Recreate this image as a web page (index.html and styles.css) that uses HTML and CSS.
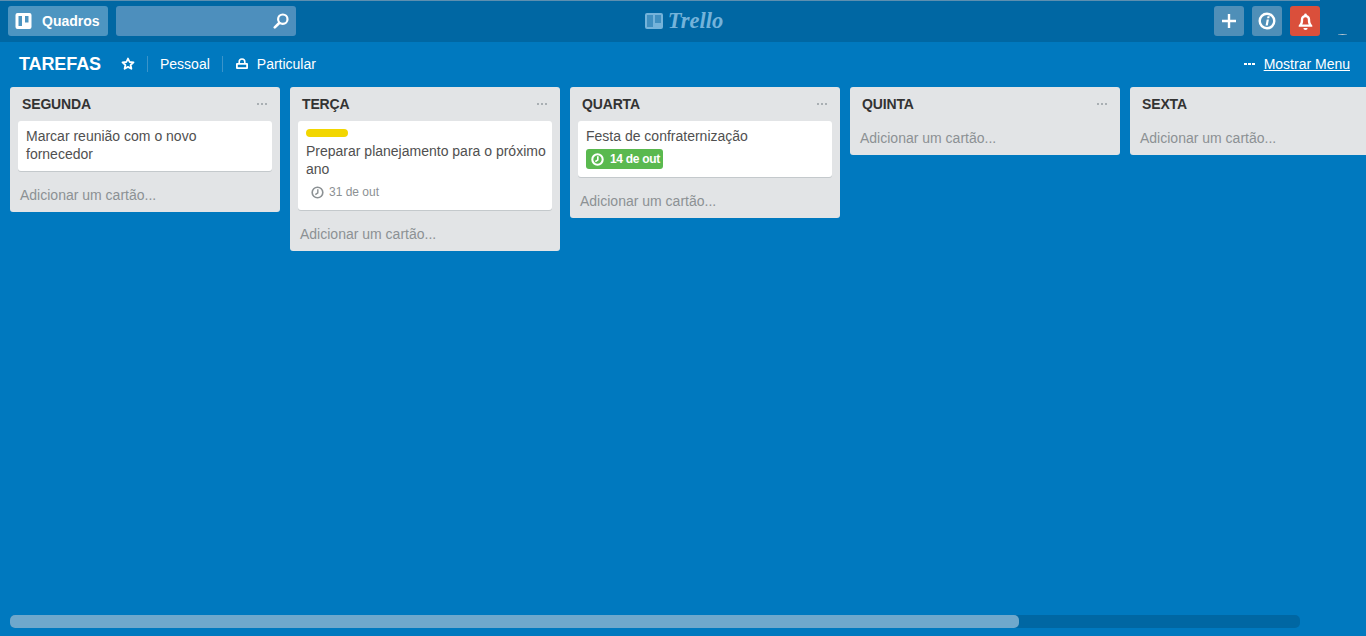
FILE: index.html
```html
<!DOCTYPE html>
<html lang="pt">
<head>
<meta charset="utf-8">
<title>Tarefas | Trello</title>
<link rel="stylesheet" href="styles.css">
</head>
<body>
<div class="page">
  <header class="topbar">
    <div class="topbar-left">
      <button class="btn btn-boards">
        <svg class="ico-boards" viewBox="0 0 16 16"><path fill="#fff" fill-rule="evenodd" d="M2 0h12a2 2 0 0 1 2 2v12a2 2 0 0 1-2 2H2a2 2 0 0 1-2-2V2a2 2 0 0 1 2-2zm1 3v10h3.500V3zM9.500 3v6.500H13V3z"/></svg>
        <span>Quadros</span>
      </button>
      <div class="search">
        <svg class="ico-search" viewBox="0 0 16 16"><circle cx="9.800" cy="6.200" r="4.700" fill="none" stroke="#fff" stroke-width="2.200"/><path d="M6.200 10 1.800 14.400" stroke="#fff" stroke-width="2.600" stroke-linecap="round"/></svg>
      </div>
    </div>
    <div class="logo">
      <svg class="ico-logo" viewBox="0 0 18 16"><path fill="#74b3da" fill-rule="evenodd" d="M2 0h14a2 2 0 0 1 2 2v12a2 2 0 0 1-2 2H2a2 2 0 0 1-2-2V2a2 2 0 0 1 2-2zm0 2v12h6V2zM10 2v8h6V2z"/><path fill="#3f8fc0" d="M2 2h6v12H2zM10 2h6v8h-6z"/></svg>
      <span class="logo-text">Trello</span>
    </div>
    <div class="topbar-right">
      <button class="btn btn-icon"><svg viewBox="0 0 16 16"><path d="M8 1v14M1 8h14" stroke="#fff" stroke-width="2.400"/></svg></button>
      <button class="btn btn-icon btn-info"><svg viewBox="0 0 18 18"><circle cx="9" cy="9" r="7.300" fill="none" stroke="#fff" stroke-width="2.400"/><path d="M9.500 4.200h2.200l-.4 2H9.100zM8.700 7.400h2.200l-1.100 6.200H7.600z" fill="#fff"/></svg></button>
      <button class="btn btn-icon btn-bell"><svg viewBox="0 0 16 16"><path fill="#fff" fill-rule="evenodd" d="M8 .5a1.300 1.300 0 0 1 1.300 1.300c2.100.5 3.100 2.200 3.100 4.400 0 2.600.4 3.900 2 5.500v1.300H1.600v-1.300c1.600-1.600 2-2.900 2-5.500 0-2.200 1-3.900 3.100-4.400A1.300 1.300 0 0 1 8 .5zM8 4c-1.500 0-2.200 1-2.200 2.400 0 1.900-.2 3.400-.9 4.500h6.200c-.7-1.100-.9-2.600-.9-4.500C10.200 5 9.500 4 8 4zM6 14h4a2 2 0 0 1-4 0z"/></svg></button>
      <span class="avatar-mark"></span>
    </div>
  </header>

  <div class="board-head">
    <div class="board-info">
      <h1 class="board-title">TAREFAS</h1>
      <svg class="ico-star" viewBox="0 0 14 14"><path d="M7 1.500 8.600 5l3.900.4-2.900 2.600.8 3.800L7 9.900l-3.400 1.900.8-3.800L1.500 5.400 5.400 5z" fill="none" stroke="#fff" stroke-width="1.800" stroke-linejoin="round"/></svg>
      <span class="divider"></span>
      <span class="board-link">Pessoal</span>
      <span class="divider"></span>
      <svg class="ico-lock" viewBox="0 0 12 12"><path d="M3.200 5.500V3.800a2.800 2.800 0 0 1 5.600 0v1.700" fill="none" stroke="#fff" stroke-width="1.600"/><path fill="#fff" fill-rule="evenodd" d="M1 5h10a1 1 0 0 1 1 1v4a1 1 0 0 1-1 1H1a1 1 0 0 1-1-1V6a1 1 0 0 1 1-1zm.8 1.800v2.400h8.400V6.800z"/></svg>
      <span class="board-link">Particular</span>
    </div>
    <div class="board-menu">
      <span class="dots dots-white"><i></i><i></i><i></i></span>
      <a class="menu-link">Mostrar Menu</a>
    </div>
  </div>

  <main class="lists">
    <section class="list">
      <div class="list-head"><h2>SEGUNDA</h2><span class="dots"><i></i><i></i><i></i></span></div>
      <article class="card"><p>Marcar reunião com o novo fornecedor</p></article>
      <div class="add">Adicionar um cartão...</div>
    </section>
    <section class="list">
      <div class="list-head"><h2>TERÇA</h2><span class="dots"><i></i><i></i><i></i></span></div>
      <article class="card">
        <div class="label"></div>
        <p>Preparar planejamento para o próximo ano</p>
        <div class="due">
          <svg viewBox="0 0 12 12"><circle cx="6" cy="6" r="4.900" fill="none" stroke="#8c9194" stroke-width="1.500"/><path d="M6.300 2.900V6.300L4 7.900" fill="none" stroke="#8c9194" stroke-width="1.300"/></svg>
          <span>31 de out</span>
        </div>
      </article>
      <div class="add">Adicionar um cartão...</div>
    </section>
    <section class="list">
      <div class="list-head"><h2>QUARTA</h2><span class="dots"><i></i><i></i><i></i></span></div>
      <article class="card">
        <p>Festa de confraternização</p>
        <div class="due due-done">
          <svg viewBox="0 0 12 12"><circle cx="6" cy="6" r="4.800" fill="none" stroke="#fff" stroke-width="1.900"/><path d="M6.300 2.900V6.300L4 7.900" fill="none" stroke="#fff" stroke-width="1.500"/></svg>
          <span>14 de out</span>
        </div>
      </article>
      <div class="add">Adicionar um cartão...</div>
    </section>
    <section class="list">
      <div class="list-head"><h2>QUINTA</h2><span class="dots"><i></i><i></i><i></i></span></div>
      <div class="add">Adicionar um cartão...</div>
    </section>
    <section class="list">
      <div class="list-head"><h2>SEXTA</h2><span class="dots"><i></i><i></i><i></i></span></div>
      <div class="add">Adicionar um cartão...</div>
    </section>
  </main>

  <div class="scrollbar"><div class="scroll-thumb"></div></div>
</div>
</body>
</html>
```
FILE: styles.css
```css
* { box-sizing: border-box; }
html, body { margin: 0; height: 100%; }
body {
  font-family: "Liberation Sans", Arial, sans-serif;
  font-size: 14px;
  background: #0079bf;
  overflow: hidden;
}
.page { height: 636px; display: flex; flex-direction: column; overflow: hidden; }

.topbar {
  height: 42px;
  flex: none;
  background: #0067a3 linear-gradient(#5d8fb0, #5d8fb0) 0 0 / 1320px 1px no-repeat;
  padding: 6px 0 0 8px;
  display: grid;
  grid-template-columns: 1fr auto 1fr;
  align-items: start;
}
.topbar-left { display: flex; gap: 8px; }
.topbar-right { display: flex; gap: 8px; justify-content: flex-end; align-items: flex-start; padding-right: 19px; }
.btn {
  border: 0;
  height: 30px;
  padding: 0;
  border-radius: 3px;
  background: #4d95c1;
  color: #fff;
  font: bold 14px "Liberation Sans", Arial, sans-serif;
  display: flex;
  align-items: center;
  justify-content: center;
}
.btn-boards { width: 100px; justify-content: flex-start; padding-left: 7px; background: #4d95c1; }
.btn-boards span { margin-left: 10px; }
.ico-boards { width: 17px; height: 16px; }
.search {
  width: 180px;
  height: 30px;
  border-radius: 3px;
  background: #4d8fbd;
  display: flex;
  align-items: center;
  justify-content: flex-end;
  padding-right: 7px;
}
.ico-search { width: 16px; height: 16px; }
.logo { display: flex; align-items: center; gap: 5px; height: 30px; margin-right: 6px; }
.ico-logo { width: 18px; height: 16px; }
.logo-text {
  font-family: "Liberation Serif", serif;
  font-style: italic;
  font-weight: bold;
  font-size: 22.500px;
  color: #74b3da;
  line-height: 30px;
}
.btn-icon { width: 30px; background: #4f8fb8; }
.btn-icon svg { width: 16px; height: 16px; }
.btn-info svg { width: 18px; height: 18px; }
.btn-bell { background: #da4f3b; }
.btn-bell svg { width: 17px; height: 17px; }
.avatar-mark {
  width: 9px;
  height: 1px;
  background: linear-gradient(90deg, #4d8bb3, #b5c4ce 50%, #4d8bb3);
  margin: 28px 0 0 10px;
}

.board-head {
  height: 45px;
  flex: none;
  padding: 0 16px 2px 19px;
  display: flex;
  align-items: center;
  justify-content: space-between;
  color: #fff;
}
.board-info { display: flex; align-items: center; }
.board-title { margin: 0; font-size: 18px; font-weight: bold; line-height: 22px; letter-spacing: -.1px; }
.ico-star { width: 14px; height: 14px; margin-left: 20px; }
.divider { width: 1px; height: 16px; background: #3a94ca; margin: 0 12px; }
.board-link { font-size: 14px; line-height: 18px; }
.ico-lock { width: 12px; height: 12px; margin: 0 9px 0 1px; }
.board-menu { display: flex; align-items: center; gap: 9px; }
.menu-link { font-size: 14px; text-decoration: underline; color: #fff; }

.dots { display: inline-flex; gap: 2px; }
.dots i { width: 2px; height: 2px; background: #a9afb3; }
.dots-white { gap: 1px; }
.dots-white i { background: #fff; width: 3px; height: 2px; }

.lists {
  flex: 1;
  min-height: 0;
  display: flex;
  align-items: flex-start;
  gap: 10px;
  padding-left: 10px;
  overflow: hidden;
}
.list {
  flex: none;
  width: 270px;
  background: #e2e4e6;
  border-radius: 3px;
  color: #505050;
}
.list-head {
  height: 34px;
  padding: 0 13px 0 12px;
  display: flex;
  align-items: center;
  justify-content: space-between;
}
.list-head h2 { margin: 0; font-size: 14px; font-weight: bold; color: #333; letter-spacing: -.15px; }
.card {
  margin: 0 8px 7px;
  padding: 6px 6px 8px 8px;
  background: #fff;
  border-radius: 3px;
  box-shadow: 0 1px 0 #c4c9cc;
  line-height: 18px;
}
.card p { margin: 0; }
.label { width: 42px; height: 8px; border-radius: 4px; background: #f2d600; margin: 2px 0 5px; }
.due {
  display: flex;
  width: fit-content;
  align-items: center;
  height: 20px;
  margin-top: 4px;
  padding: 0 5px;
  font-size: 12px;
  color: #8c9194;
  border-radius: 3px;
}
.due svg { width: 13px; height: 13px; margin-right: 5px; }
.due-done { background: #5ab94f; color: #fff; font-weight: bold; padding: 0 3px 0 5px; letter-spacing: -.3px; }
.due-done svg { margin-right: 6px; }
.add { height: 34px; line-height: 34px; padding-left: 10px; color: #8c9194; }

.scrollbar {
  flex: none;
  width: 1290px;
  height: 13px;
  margin: 0 0 8px 10px;
  border-radius: 5px;
  background: #0067a3;
}
.scroll-thumb { width: 1009px; height: 100%; border-radius: 5px; background: #6fa8cc; }
```
